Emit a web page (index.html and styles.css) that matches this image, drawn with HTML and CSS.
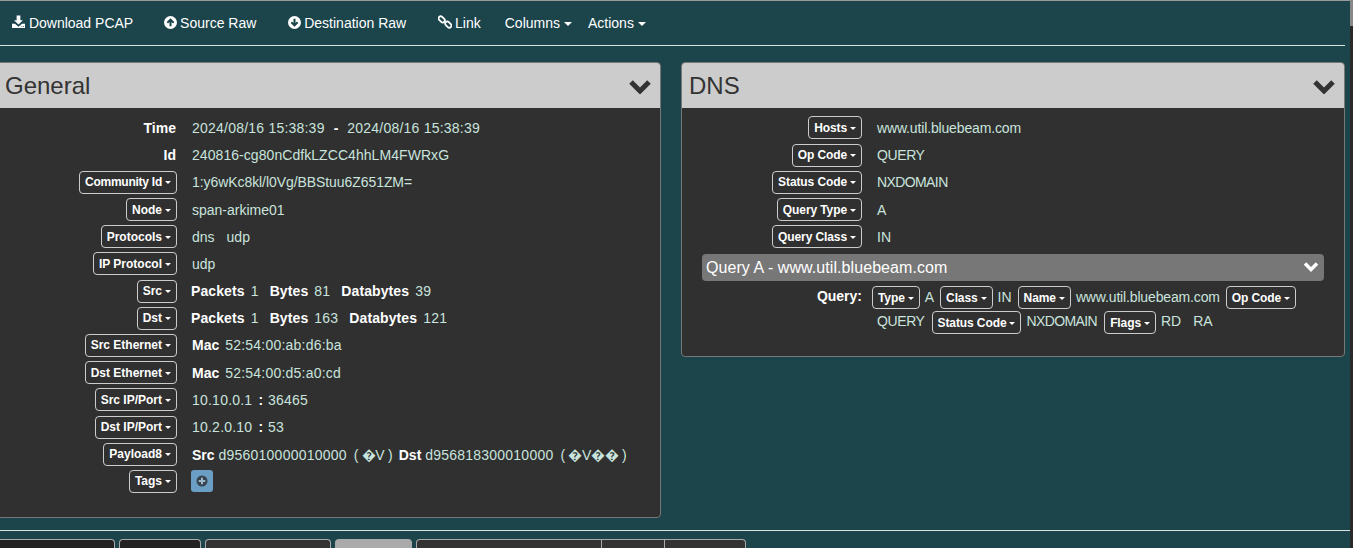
FILE: index.html
```html
<!DOCTYPE html>
<html lang="en">
<head>
    <meta charset="UTF-8">
    <meta name="viewport" content="width=device-width, initial-scale=1.0">
    <title>Session Detail</title>
    <link rel="stylesheet" href="styles.css">
</head>
<body>
    <div class="page">
        <!-- Toolbar -->
        <nav class="toolbar">
            <a class="tool tool-download">
                <svg class="icon" width="13" height="14" viewBox="0 0 14 14"><path d="M5 0h4v5h2.800L7 9.800 2.200 5H5z"/><path fill-rule="evenodd" d="M0 9h3.200L7 12l3.800-3H14v4.500H0zM10.300 11.500h.9v.9h-.9zM12 11.500h.9v.9H12z"/></svg>
                Download PCAP
            </a>
            <a class="tool tool-raw">
                <svg class="icon icon-tight" width="13" height="13" viewBox="0 0 13 13"><circle cx="6.500" cy="6.500" r="6.500"/><path class="icon-cut" d="M6.500 2.300l3.800 3.800-1.300 1.300-1.500-1.500v4.300H5.500V5.900L4 7.400 2.700 6.100z"/></svg>
                Source Raw
            </a>
            <a class="tool tool-raw">
                <svg class="icon icon-tight" width="13" height="13" viewBox="0 0 13 13"><circle cx="6.500" cy="6.500" r="6.500"/><path class="icon-cut" d="M6.500 10.700L2.700 6.900 4 5.600l1.500 1.500V2.800h2v4.300L9 5.600l1.300 1.300z"/></svg>
                Destination Raw
            </a>
            <a class="tool tool-link">
                <svg class="icon icon-link icon-tight" width="14" height="14" viewBox="0 0 14 14"><rect x="0.200" y="2.300" width="7" height="4.200" rx="2.100" transform="rotate(45 3.700 4.400)"/><rect x="6.800" y="7.500" width="7" height="4.200" rx="2.100" transform="rotate(45 10.300 9.600)"/></svg>
                Link
            </a>
            <a class="tool tool-menu">Columns<span class="caret caret-nav"></span></a>
            <a class="tool">Actions<span class="caret caret-nav"></span></a>
        </nav>
        <hr class="rule rule-top">

        <div class="panels">
            <!-- General -->
            <section class="panel">
                <header class="panel-head">
                    <h2>General</h2>
                    <svg class="chevron" width="24" height="15" viewBox="0 0 24 15"><polyline points="3,3 12,12 21,3"/></svg>
                </header>
                <div class="panel-body panel-body-general">
                    <div class="row"><div class="label"><b>Time</b></div><div class="value digits">2024/08/16 15:38:39<b class="dash">-</b>2024/08/16 15:38:39</div></div>
                    <div class="row"><div class="label"><b>Id</b></div><div class="value session-id">240816-cg80nCdfkLZCC4hhLM4FWRxG</div></div>
                    <div class="row"><div class="label"><button class="field field-tight">Community Id<span class="caret"></span></button></div><div class="value community-id">1:y6wKc8kl/l0Vg/BBStuu6Z651ZM=</div></div>
                    <div class="row"><div class="label"><button class="field">Node<span class="caret"></span></button></div><div class="value">span-arkime01</div></div>
                    <div class="row"><div class="label"><button class="field">Protocols<span class="caret"></span></button></div><div class="value"><span class="item">dns</span><span class="item">udp</span></div></div>
                    <div class="row"><div class="label"><button class="field">IP Protocol<span class="caret"></span></button></div><div class="value">udp</div></div>
                    <div class="row"><div class="label"><button class="field">Src<span class="caret"></span></button></div><div class="value stats"><b>Packets</b><span class="num digits">1</span><b>Bytes</b><span class="num digits">81</span><b>Databytes</b><span class="num digits">39</span></div></div>
                    <div class="row"><div class="label"><button class="field">Dst<span class="caret"></span></button></div><div class="value stats"><b>Packets</b><span class="num digits">1</span><b>Bytes</b><span class="num digits">163</span><b>Databytes</b><span class="num digits">121</span></div></div>
                    <div class="row"><div class="label"><button class="field">Src Ethernet<span class="caret"></span></button></div><div class="value"><b class="key">Mac</b><span class="digits">52:54:00:ab:d6:ba</span></div></div>
                    <div class="row"><div class="label"><button class="field">Dst Ethernet<span class="caret"></span></button></div><div class="value"><b class="key">Mac</b><span class="digits">52:54:00:d5:a0:cd</span></div></div>
                    <div class="row"><div class="label"><button class="field">Src IP/Port<span class="caret"></span></button></div><div class="value digits">10.10.0.1<b class="colon">:</b>36465</div></div>
                    <div class="row"><div class="label"><button class="field">Dst IP/Port<span class="caret"></span></button></div><div class="value digits">10.2.0.10<b class="colon">:</b>53</div></div>
                    <div class="row"><div class="label"><button class="field">Payload8<span class="caret"></span></button></div><div class="value"><b class="key-sm">Src</b><span class="digits">d956010000010000</span><span class="decoded">( �V )</span><b class="key-sm">Dst</b><span class="digits">d956818300010000</span><span class="decoded">( �V�� )</span></div></div>
                    <div class="row"><div class="label"><button class="field">Tags<span class="caret"></span></button></div><div class="value">
                        <button class="add-tag"><svg width="12" height="12" viewBox="0 0 12 12"><circle cx="6" cy="6" r="5.500" fill="#39454e"/><path d="M5 2.700h2V5h2.300v2H7v2.300H5V7H2.700V5H5z" fill="#9db8cc"/></svg></button>
                    </div></div>
                </div>
            </section>

            <!-- DNS -->
            <section class="panel">
                <header class="panel-head">
                    <h2>DNS</h2>
                    <svg class="chevron" width="24" height="15" viewBox="0 0 24 15"><polyline points="3,3 12,12 21,3"/></svg>
                </header>
                <div class="panel-body panel-body-dns">
                    <div class="row"><div class="label"><button class="field">Hosts<span class="caret"></span></button></div><div class="value host">www.util.bluebeam.com</div></div>
                    <div class="row"><div class="label"><button class="field">Op Code<span class="caret"></span></button></div><div class="value opcode">QUERY</div></div>
                    <div class="row"><div class="label"><button class="field">Status Code<span class="caret"></span></button></div><div class="value status">NXDOMAIN</div></div>
                    <div class="row"><div class="label"><button class="field">Query Type<span class="caret"></span></button></div><div class="value">A</div></div>
                    <div class="row"><div class="label"><button class="field">Query Class<span class="caret"></span></button></div><div class="value">IN</div></div>

                    <div class="query-bar">
                        <span class="query-title">Query A - www.util.bluebeam.com</span>
                        <svg class="chevron chevron-white" width="18" height="12" viewBox="0 0 18 12"><polyline points="3,2.500 9,8.500 15,2.500"/></svg>
                    </div>
                    <div class="query">
                        <div class="label"><b>Query:</b></div>
                        <div class="query-fields">
                            <button class="field">Type<span class="caret"></span></button><span class="qval">A</span><button class="field">Class<span class="caret"></span></button><span class="qval">IN</span><button class="field">Name<span class="caret"></span></button><span class="qval host">www.util.bluebeam.com</span><button class="field">Op Code<span class="caret"></span></button><span class="qval opcode qval-wide">QUERY</span><button class="field">Status Code<span class="caret"></span></button><span class="qval status qval-wide">NXDOMAIN</span><button class="field">Flags<span class="caret"></span></button><span class="qval qval-flag">RD</span><span class="qval">RA</span>
                        </div>
                    </div>
                </div>
            </section>
        </div>

        <hr class="rule rule-bottom">

        <!-- Bottom tabs, cut off by the window -->
        <div class="tabs">
            <div class="tab tab-dark tab-first"></div>
            <div class="tab tab-dark tab-second"></div>
            <div class="tab tab-third"></div>
            <div class="tab tab-active"></div>
            <div class="tab-group">
                <div class="tab-part tab-part-a"></div>
                <div class="tab-part tab-part-b"></div>
                <div class="tab-part tab-part-c"></div>
            </div>
        </div>
    </div>

    <div class="scrollbar"><div class="scrollbar-thumb"></div></div>
</body>
</html>
```

FILE: styles.css
```css
html, body {
    height: 100%;
    margin: 0;
    overflow: hidden;
}
body {
    background-color: #1b444b;
    color: #fff;
    font-family: "Liberation Sans", Arial, sans-serif;
    font-size: 14px;
}
.page {
    border-top: 1px solid #999;
    height: 547px;
    overflow: hidden;
    width: 1350px;
}

/* toolbar */
.toolbar {
    align-items: center;
    display: flex;
    height: 44px;
    padding-left: 12px;
}
.tool {
    color: #fff;
    white-space: nowrap;
}
.tool-download {
    margin-right: 31px;
}
.tool-raw {
    margin-right: 32px;
}
.tool-link {
    margin-right: 24px;
}
.tool-menu {
    margin-right: 16px;
}
.icon {
    fill: #fff;
    vertical-align: -1px;
}
.icon-tight {
    margin-right: -1px;
}
.icon-cut {
    fill: #1b444b;
}
.icon-link {
    fill: none;
    stroke: #fff;
    stroke-width: 1.800;
}
.caret {
    border-left: 3px solid transparent;
    border-right: 3px solid transparent;
    border-top: 3px solid #fff;
    display: inline-block;
    margin-left: 3px;
    vertical-align: 2px;
}
.caret-nav {
    border-left-width: 4px;
    border-right-width: 4px;
    border-top-width: 4px;
    margin-left: 4px;
}
.rule {
    background-color: #d8e0e0;
    border: none;
    height: 1px;
    margin: 0;
}
.rule-top {
    width: 1345px;
}
.rule-bottom {
    margin-top: 12px;
}

/* panels */
.panels {
    align-items: start;
    display: grid;
    gap: 20px;
    grid-template-columns: 664px 664px;
    margin-left: -3px;
    margin-top: 16px;
}
.panel {
    background-color: #303030;
    border: 1px solid #777;
    border-radius: 4px;
    overflow: hidden;
}
.panel-head {
    align-items: center;
    background-color: #ccc;
    color: #333;
    display: flex;
    height: 45px;
    justify-content: space-between;
    padding: 0 8px 0 7px;
}
.panel-head h2 {
    font-size: 24px;
    font-weight: normal;
    margin: 0;
}
.chevron {
    fill: none;
    stroke: #333;
    stroke-width: 5;
}
.panel-head .chevron {
    margin-top: 2px;
}
.chevron-white {
    stroke: #fff;
    stroke-width: 3.500;
}
.panel-body {
    padding: 6.400px 0 22px;
}
.panel-body-general {
    padding-bottom: 21.850px;
}
.panel-body-general .label b {
    margin-right: 1px;
}
.panel-body-dns .label {
    width: 180px;
}
.panel-body-dns .field {
    letter-spacing: -0.1px;
}
.row {
    align-items: center;
    display: flex;
    height: 27.200px;
}
.label {
    flex: none;
    text-align: right;
    width: 179px;
}
.value {
    color: #c9e3dd;
    margin-left: 15px;
    white-space: nowrap;
}
.value b, .query b, .label b {
    color: #fff;
}
.field {
    background: none;
    border: 1px solid #ccc;
    border-radius: 4px;
    color: #fff;
    font-family: inherit;
    font-size: 12px;
    font-weight: bold;
    height: 23px;
    padding: 0 5px;
    vertical-align: middle;
    white-space: nowrap;
}
.field-tight {
    letter-spacing: -0.25px;
}

/* tweaks so the text runs as wide as in the capture */
.digits {
    letter-spacing: 0.22px;
}
.digits b {
    letter-spacing: 0;
}
.session-id {
    letter-spacing: 0.06px;
}
.community-id {
    letter-spacing: -0.07px;
}
.host {
    letter-spacing: -0.15px;
}
.opcode {
    letter-spacing: -0.4px;
}
.status {
    letter-spacing: -0.6px;
}
.query-title {
    letter-spacing: 0.07px;
    padding-top: 1px;
}
.stats b {
    letter-spacing: 0.1px;
}

.dash {
    margin: 0 9px;
}
.item {
    margin-right: 12px;
}
.stats {
    margin-left: 14px;
}
.num {
    margin: 0 11px 0 6px;
}
.key {
    margin-right: 6px;
}
.key-sm {
    margin-right: 4px;
}
.colon {
    margin: 0 5px 0 6px;
}
.decoded {
    letter-spacing: -0.3px;
    margin: 0 6.400px 0 7px;
}
.add-tag {
    align-items: center;
    background-color: #6b9ec4;
    border: none;
    border-radius: 3px;
    display: flex;
    height: 22px;
    justify-content: center;
    margin-left: -1px;
    padding: 0;
    width: 22px;
}

/* query block */
.query-bar {
    align-items: center;
    background-color: #777;
    border-radius: 4px;
    display: flex;
    font-size: 16px;
    height: 27px;
    justify-content: space-between;
    margin: 3.250px 20px 0;
    padding: 0 4px 0 4px;
}
.query {
    display: flex;
    margin-top: 4px;
}
.query .label {
    line-height: 23px;
}
.query-fields {
    color: #c9e3dd;
    line-height: 24px;
    margin-left: 10px;
    width: 440px;
}
.qval {
    padding: 0 5px;
}
.qval-wide {
    padding-right: 6px;
}
.qval + .field {
    margin-left: 1px;
}
.qval-flag {
    margin-right: 2px;
}

/* tabs */
.tabs {
    display: flex;
    gap: 4px;
    margin-top: 8px;
}
.tab, .tab-group {
    background-color: #333;
    border: 1px solid #aaa;
    border-bottom: none;
    border-radius: 4px 4px 0 0;
    box-sizing: border-box;
    height: 12px;
}
.tab-dark {
    background-color: #222;
}
.tab-first {
    margin-left: -10px;
    width: 125px;
}
.tab-second {
    width: 82px;
}
.tab-third {
    width: 126px;
}
.tab-active {
    background-color: #aaa;
    border-color: #aaa;
    width: 77px;
}
.tab-group {
    display: flex;
    width: 330px;
}
.tab-part {
    border-left: 1px solid #aaa;
}
.tab-part-a {
    border-left: none;
    width: 185px;
}
.tab-part-b {
    width: 63px;
}
.tab-part-c {
    width: 80px;
}

/* window scrollbar */
.scrollbar {
    background-color: #2a2a2a;
    bottom: 0;
    position: absolute;
    right: 0;
    top: 0;
    width: 3px;
}
.scrollbar-thumb {
    background-color: #888;
    height: 26px;
}
```
